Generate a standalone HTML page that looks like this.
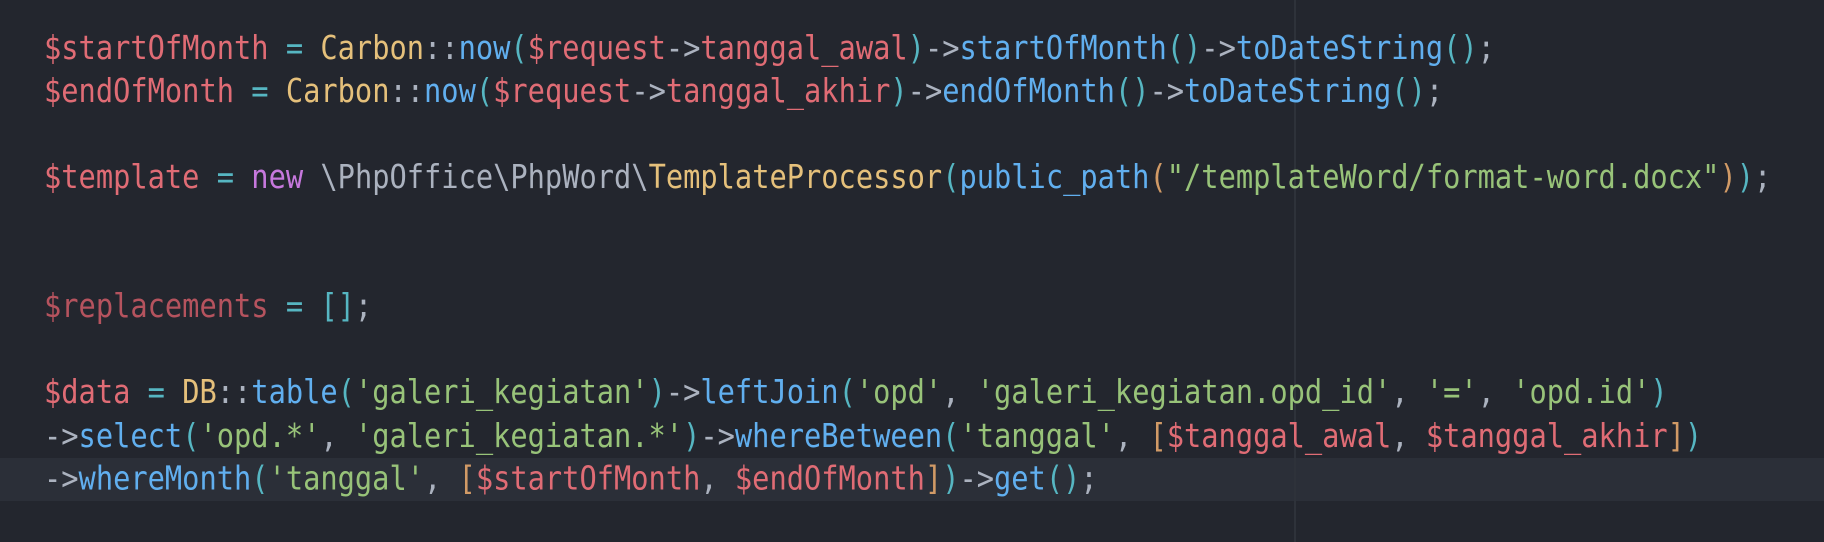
<!DOCTYPE html>
<html><head><meta charset="utf-8"><style>
html,body{margin:0;padding:0;}
body{width:1824px;height:542px;background:#23262e;position:relative;overflow:hidden;}
.hl{position:absolute;left:0;top:458px;width:1824px;height:43px;background:#2b2f38;}
.rule{position:absolute;left:1294px;top:0;width:2px;height:542px;background:#2e323a;}
pre{position:absolute;left:44px;top:27px;margin:0;font-family:"DejaVu Sans Mono",monospace;font-size:28.7px;line-height:37.39px;color:#abb2bf;white-space:pre;transform:scaleY(1.15);transform-origin:0 0;}
.r{color:#e06c75}.y{color:#e5c07b}.b{color:#61afef}.c{color:#56b6c2}.g{color:#98c379}.p{color:#c678dd}.o{color:#d19a66}.d{color:#b5535e}
</style></head><body>
<div class="hl"></div><div class="rule"></div>
<pre><span class="r">$startOfMonth</span> <span class="c">=</span> <span class="y">Carbon</span>::<span class="b">now</span><span class="c">(</span><span class="r">$request</span>-&gt;<span class="r">tanggal_awal</span><span class="c">)</span>-&gt;<span class="b">startOfMonth</span><span class="c">()</span>-&gt;<span class="b">toDateString</span><span class="c">()</span>;
<span class="r">$endOfMonth</span> <span class="c">=</span> <span class="y">Carbon</span>::<span class="b">now</span><span class="c">(</span><span class="r">$request</span>-&gt;<span class="r">tanggal_akhir</span><span class="c">)</span>-&gt;<span class="b">endOfMonth</span><span class="c">()</span>-&gt;<span class="b">toDateString</span><span class="c">()</span>;

<span class="r">$template</span> <span class="c">=</span> <span class="p">new</span> \PhpOffice\PhpWord\<span class="y">TemplateProcessor</span><span class="c">(</span><span class="b">public_path</span><span class="o">(</span><span class="g">"/templateWord/format-word.docx"</span><span class="o">)</span><span class="c">)</span>;


<span class="d">$replacements</span> <span class="c">=</span> <span class="c">[]</span>;

<span class="r">$data</span> <span class="c">=</span> <span class="y">DB</span>::<span class="b">table</span><span class="c">(</span><span class="g">'galeri_kegiatan'</span><span class="c">)</span>-&gt;<span class="b">leftJoin</span><span class="c">(</span><span class="g">'opd'</span>, <span class="g">'galeri_kegiatan.opd_id'</span>, <span class="g">'='</span>, <span class="g">'opd.id'</span><span class="c">)</span>
-&gt;<span class="b">select</span><span class="c">(</span><span class="g">'opd.*'</span>, <span class="g">'galeri_kegiatan.*'</span><span class="c">)</span>-&gt;<span class="b">whereBetween</span><span class="c">(</span><span class="g">'tanggal'</span>, <span class="o">[</span><span class="r">$tanggal_awal</span>, <span class="r">$tanggal_akhir</span><span class="o">]</span><span class="c">)</span>
-&gt;<span class="b">whereMonth</span><span class="c">(</span><span class="g">'tanggal'</span>, <span class="o">[</span><span class="r">$startOfMonth</span>, <span class="r">$endOfMonth</span><span class="o">]</span><span class="c">)</span>-&gt;<span class="b">get</span><span class="c">()</span>;</pre>
</body></html>
